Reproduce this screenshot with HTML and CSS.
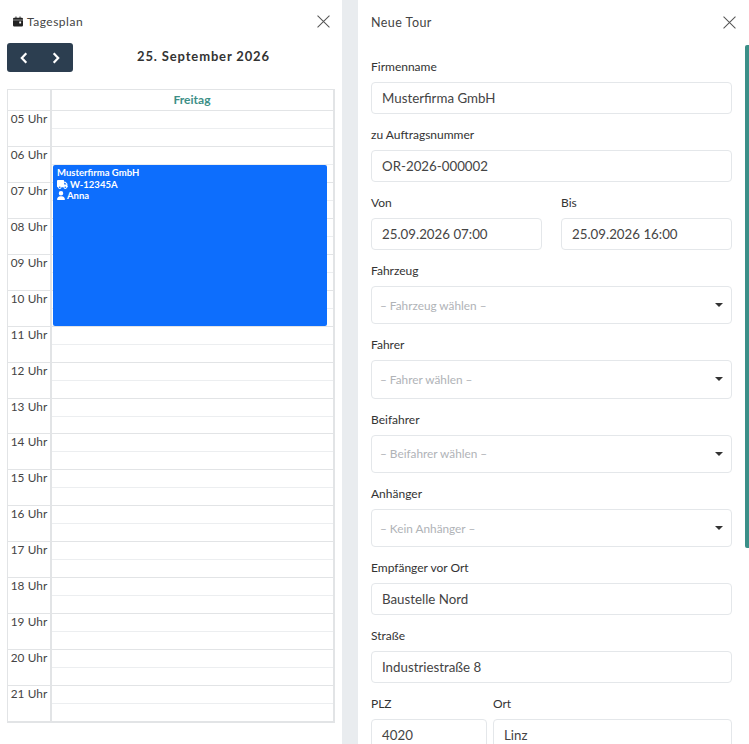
FILE: index.html
```html
<!DOCTYPE html>
<html lang="de">
<head>
<meta charset="utf-8">
<title>Neue Tour</title>
<link rel="stylesheet" href="styles.css">
</head>
<body>
<div class="page">
  <section class="plan">
    <header class="plan-head">
      <h2 class="plan-title">
        <svg class="cal-icon" viewBox="0 0 16 16"><path d="M4 0h1.5v2h5V0H12v2h2a2 2 0 0 1 2 2v1H0V4a2 2 0 0 1 2-2h2zM0 6h16v8a2 2 0 0 1-2 2H2a2 2 0 0 1-2-2zm10.5 2a.5.5 0 0 0-.5.5v2a.5.5 0 0 0 .5.5h2a.5.5 0 0 0 .5-.5v-2a.5.5 0 0 0-.5-.5z"/></svg>
        <span>Tagesplan</span>
      </h2>
      <svg class="close" viewBox="0 0 12 12"><path d="M.5.5l11 11M11.5.5l-11 11"/></svg>
    </header>
    <div class="plan-nav">
      <div class="nav-btns">
        <svg class="chev" viewBox="0 0 8 12"><path d="M6.300 1.200L1.800 6l4.500 4.800"/></svg>
        <svg class="chev" viewBox="0 0 8 12"><path d="M1.700 1.200L6.200 6l-4.500 4.800"/></svg>
      </div>
      <div class="plan-date">25. September 2026</div>
    </div>
    <div class="grid">
      <div class="grid-head"><div class="g-time"></div><div class="g-day">Freitag</div></div>
      <div class="g-hour"><div class="g-time">05 Uhr</div><div class="g-cell"></div></div>
      <div class="g-hour"><div class="g-time">06 Uhr</div><div class="g-cell"></div></div>
      <div class="g-hour"><div class="g-time">07 Uhr</div><div class="g-cell"></div></div>
      <div class="g-hour"><div class="g-time">08 Uhr</div><div class="g-cell"></div></div>
      <div class="g-hour"><div class="g-time">09 Uhr</div><div class="g-cell"></div></div>
      <div class="g-hour"><div class="g-time">10 Uhr</div><div class="g-cell"></div></div>
      <div class="g-hour"><div class="g-time">11 Uhr</div><div class="g-cell"></div></div>
      <div class="g-hour"><div class="g-time">12 Uhr</div><div class="g-cell"></div></div>
      <div class="g-hour"><div class="g-time">13 Uhr</div><div class="g-cell"></div></div>
      <div class="g-hour"><div class="g-time">14 Uhr</div><div class="g-cell"></div></div>
      <div class="g-hour"><div class="g-time">15 Uhr</div><div class="g-cell"></div></div>
      <div class="g-hour"><div class="g-time">16 Uhr</div><div class="g-cell"></div></div>
      <div class="g-hour"><div class="g-time">17 Uhr</div><div class="g-cell"></div></div>
      <div class="g-hour"><div class="g-time">18 Uhr</div><div class="g-cell"></div></div>
      <div class="g-hour"><div class="g-time">19 Uhr</div><div class="g-cell"></div></div>
      <div class="g-hour"><div class="g-time">20 Uhr</div><div class="g-cell"></div></div>
      <div class="g-hour"><div class="g-time">21 Uhr</div><div class="g-cell"></div></div>
      <div class="event">
        <div class="ev-name">Musterfirma GmbH</div>
        <div class="ev-line">
          <svg class="ev-truck" viewBox="0 0 640 512"><path d="M48 0C21.5 0 0 21.5 0 48v320c0 26.5 21.5 48 48 48h16c0 53 43 96 96 96s96-43 96-96h128c0 53 43 96 96 96s96-43 96-96h32c17.7 0 32-14.3 32-32s-14.3-32-32-32V237.300c0-17-6.700-33.300-18.700-45.300L512 114.700c-12-12-28.300-18.700-45.300-18.700H416V48c0-26.500-21.500-48-48-48zm368 160h50.700l77.300 77.300V256H416zM112 416a48 48 0 1 1 96 0 48 48 0 1 1-96 0m368-48a48 48 0 1 1 0 96 48 48 0 1 1 0-96"/></svg>
          <span>W-12345A</span>
        </div>
        <div class="ev-line">
          <svg class="ev-user" viewBox="0 0 448 512"><path d="M224 256a128 128 0 1 0 0-256 128 128 0 1 0 0 256m-45.700 48C79.800 304 0 383.800 0 482.300 0 498.700 13.300 512 29.700 512h388.600c16.400 0 29.700-13.300 29.700-29.700C448 383.800 368.200 304 269.700 304z"/></svg>
          <span>Anna</span>
        </div>
      </div>
    </div>
  </section>

  <section class="tour">
    <div class="thumb"></div>
    <header class="tour-head">
      <h2 class="tour-title">Neue Tour</h2>
      <svg class="close" viewBox="0 0 12 12"><path d="M.5.5l11 11M11.5.5l-11 11"/></svg>
    </header>
    <form class="form">
      <div class="group"><div class="label">Firmenname</div><div class="field">Musterfirma GmbH</div></div>
      <div class="group"><div class="label">zu Auftragsnummer</div><div class="field">OR-2026-000002</div></div>
      <div class="row row-dates">
        <div class="group"><div class="label">Von</div><div class="field">25.09.2026 07:00</div></div>
        <div class="group"><div class="label">Bis</div><div class="field">25.09.2026 16:00</div></div>
      </div>
      <div class="group"><div class="label">Fahrzeug</div><div class="select"><span>– Fahrzeug wählen –</span><i class="caret"></i></div></div>
      <div class="group"><div class="label">Fahrer</div><div class="select"><span>– Fahrer wählen –</span><i class="caret"></i></div></div>
      <div class="group"><div class="label">Beifahrer</div><div class="select"><span>– Beifahrer wählen –</span><i class="caret"></i></div></div>
      <div class="group"><div class="label">Anhänger</div><div class="select"><span>– Kein Anhänger –</span><i class="caret"></i></div></div>
      <div class="group"><div class="label">Empfänger vor Ort</div><div class="field">Baustelle Nord</div></div>
      <div class="group"><div class="label">Straße</div><div class="field">Industriestraße 8</div></div>
      <div class="row row-city">
        <div class="group"><div class="label">PLZ</div><div class="field">4020</div></div>
        <div class="group"><div class="label">Ort</div><div class="field">Linz</div></div>
      </div>
    </form>
  </section>
</div>
</body>
</html>
```

FILE: styles.css
```css
* { box-sizing: border-box; }
html, body { margin: 0; height: 744px; overflow: hidden; }
body { font-family: "Lato", "Open Sans", sans-serif; color: #333; background: #e9ecef; }
.page { display: flex; gap: 16px; height: 744px; overflow: hidden; }

.plan { width: 342px; flex: none; background: #fff; padding: 0 6px 0 7px; }
.plan-head { display: flex; align-items: center; justify-content: space-between; height: 43px; padding: 0 6px; }
.plan-title { margin: 0; font-size: 12px; font-weight: 400; color: #444; display: flex; align-items: center; gap: 4px; letter-spacing: .5px; }
.cal-icon { width: 10px; height: 11px; fill: #222; }
.close { width: 13px; height: 13px; fill: none; stroke: #555; stroke-width: .95; }
.plan-nav { display: flex; align-items: center; height: 29px; margin-bottom: 17px; }
.nav-btns { width: 66px; height: 29px; background: #2c3e50; border-radius: 3px; display: flex; align-items: center; justify-content: space-between; padding: 0 13px; }
.chev { width: 8px; height: 12px; fill: none; stroke: #fff; stroke-width: 2.2; }
.plan-date { flex: 1; text-align: center; font-size: 13px; font-weight: 700; color: #333; letter-spacing: .85px; padding: 0 2px 3px 0; }

.grid { position: relative; width: 328px; border: 1px solid #e2e4e6; border-right-width: 2px; }
.grid-head { display: flex; height: 21px; border-bottom: 1px solid #e2e4e6; }
.g-time { width: 44px; flex: none; border-right: 2px solid #e2e4e6; font-size: 11.800px; color: #444; text-align: center; line-height: 16px; letter-spacing: .1px; }
.g-day { flex: 1; text-align: center; color: #3d8f87; font-size: 12px; font-weight: 700; line-height: 20px; padding-right: 1px; }
.g-hour { display: flex; height: 35.940px; border-bottom: 1px solid #e2e4e6; }
.g-hour .g-time { height: 35px; }
.g-cell { flex: 1; height: 18px; border-bottom: 1px solid #eceef0; }
.event { position: absolute; left: 45px; top: 75px; width: 274px; height: 161px; background: #0d6efd; border-radius: 2px; color: #fff; font-size: 9.500px; font-weight: 700; line-height: 11.500px; padding: 2px 4px; }
.ev-line { display: flex; align-items: center; gap: 2px; }
.ev-truck { width: 11px; height: 9px; fill: #fff; }
.ev-user { width: 8px; height: 9px; fill: #fff; }

.tour { position: relative; flex: 1; background: #fff; padding: 0 17px 0 13px; }
.thumb { position: absolute; right: 0; top: 45px; width: 4px; height: 503px; background: #3b8f88; border-radius: 2px 0 0 2px; }
.tour-head { display: flex; align-items: center; justify-content: space-between; height: 45px; margin-right: -4px; }
.tour-title { margin: 0; font-size: 12.500px; font-weight: 400; color: #444; letter-spacing: .45px; }
.form { display: flex; flex-direction: column; gap: 12px; padding-top: 13px; }
.group { min-width: 0; }
.label { font-size: 12px; line-height: 17px; color: #333; margin-bottom: 7px; }
.field { height: 32px; border: 1px solid #e4e7ea; border-radius: 4px; font-size: 13.300px; line-height: 30px; color: #444; padding-left: 10px; white-space: nowrap; overflow: hidden; }
.select { height: 38.300px; border: 1px solid #e4e7ea; border-radius: 4px; font-size: 11.800px; color: #b0b3b7; display: flex; align-items: center; justify-content: space-between; padding: 0 8px 0 8px; }
.caret { width: 0; height: 0; border-left: 4px solid transparent; border-right: 4px solid transparent; border-top: 4px solid #333; }
.row { display: grid; }
.row-dates { grid-template-columns: 171px 171px; column-gap: 19px; }
.row-city { grid-template-columns: 116px 239px; column-gap: 6px; }
```
